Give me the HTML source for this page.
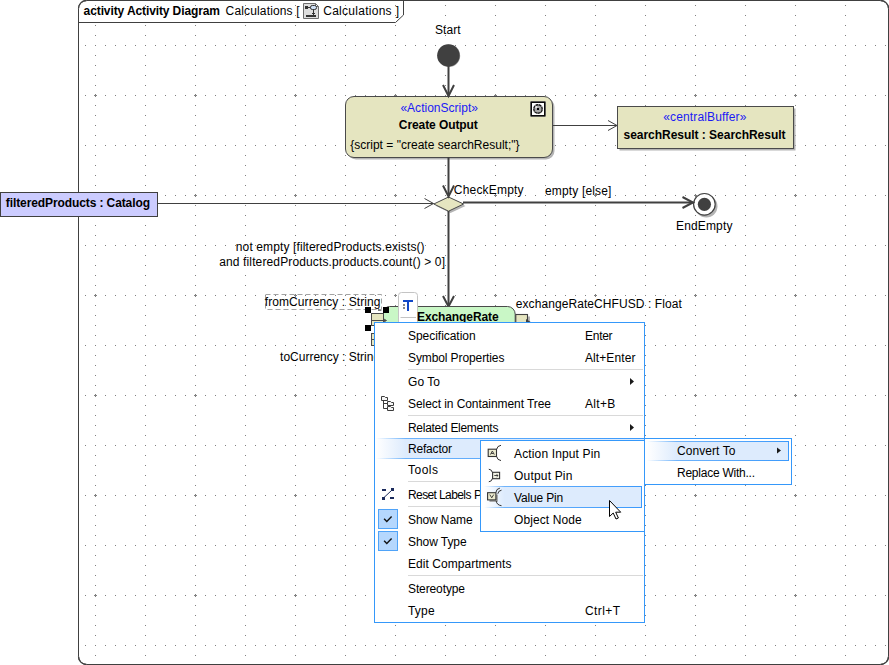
<!DOCTYPE html>
<html>
<head>
<meta charset="utf-8">
<title>Activity Diagram Calculations</title>
<style>
html,body{margin:0;padding:0;background:#fff;}
body{width:889px;height:665px;overflow:hidden;position:relative;font-family:"Liberation Sans",sans-serif;}
svg{position:absolute;left:0;top:0;display:block;}
text{font-family:"Liberation Sans",sans-serif;font-size:12px;fill:#000;}
.b{font-weight:bold;}
.bl{fill:#1a1af5;}
.m{fill:#000;font-size:12px;}
</style>
</head>
<body>
<svg width="889" height="665" viewBox="0 0 889 665">
<defs>
  <pattern id="grid" x="0" y="0" width="100" height="100" patternUnits="userSpaceOnUse">
    <g fill="#808080" shape-rendering="crispEdges">
      <!-- horizontal rows y=45,95 : dots every 10px -->
      <g id="hrow">
        <rect x="5" y="45" width="1" height="1"/><rect x="15" y="45" width="1" height="1"/><rect x="25" y="45" width="1" height="1"/><rect x="35" y="45" width="1" height="1"/><rect x="45" y="45" width="1" height="1"/><rect x="55" y="45" width="1" height="1"/><rect x="65" y="45" width="1" height="1"/><rect x="75" y="45" width="1" height="1"/><rect x="85" y="45" width="1" height="1"/><rect x="95" y="45" width="1" height="1"/>
      </g>
      <g><rect x="5" y="95" width="1" height="1"/><rect x="15" y="95" width="1" height="1"/><rect x="25" y="95" width="1" height="1"/><rect x="35" y="95" width="1" height="1"/><rect x="45" y="95" width="1" height="1"/><rect x="55" y="95" width="1" height="1"/><rect x="65" y="95" width="1" height="1"/><rect x="75" y="95" width="1" height="1"/><rect x="85" y="95" width="1" height="1"/><rect x="95" y="95" width="1" height="1"/></g>
      <g id="vcol">
        <rect x="45" y="5" width="1" height="1"/><rect x="45" y="15" width="1" height="1"/><rect x="45" y="25" width="1" height="1"/><rect x="45" y="35" width="1" height="1"/><rect x="45" y="55" width="1" height="1"/><rect x="45" y="65" width="1" height="1"/><rect x="45" y="75" width="1" height="1"/><rect x="45" y="85" width="1" height="1"/>
      </g>
      <g><rect x="95" y="5" width="1" height="1"/><rect x="95" y="15" width="1" height="1"/><rect x="95" y="25" width="1" height="1"/><rect x="95" y="35" width="1" height="1"/><rect x="95" y="55" width="1" height="1"/><rect x="95" y="65" width="1" height="1"/><rect x="95" y="75" width="1" height="1"/><rect x="95" y="85" width="1" height="1"/></g>
      <!-- cross at 95,95 -->
      <rect x="94" y="95" width="3" height="1"/><rect x="95" y="94" width="1" height="3"/>
    </g>
  </pattern>
  <linearGradient id="hl" x1="0" y1="0" x2="1" y2="0">
    <stop offset="0" stop-color="#ffffff"/>
    <stop offset="0.16" stop-color="#ddebfd"/>
    <stop offset="1" stop-color="#ddebfd"/>
  </linearGradient>
</defs>

<!-- frame with grid -->
<path d="M78.5 8.5 A8 8 0 0 1 86.5 0.5 H880.5 A8 8 0 0 1 888.5 8.5 V656.5 A8 8 0 0 1 880.5 664.5 H86.5 A8 8 0 0 1 78.5 656.5 Z" fill="url(#grid)" stroke="#404040" stroke-width="1"/>
<path d="M78.5 8.5 A8 8 0 0 1 86.5 0.5 M880.5 0.5 A8 8 0 0 1 888.5 8.5 M888.5 656.5 A8 8 0 0 1 880.5 664.5 M86.5 664.5 A8 8 0 0 1 78.5 656.5" fill="none" stroke="#404040" stroke-width="1.3"/>
<!-- header tab -->
<path d="M78.5 22.5 H395.5 L403.5 15 V0.5" fill="none" stroke="#404040" stroke-width="1"/>


<!-- ===== start node ===== -->
<circle cx="448.9" cy="55.8" r="11.3" fill="#9a9a9a"/>
<circle cx="448.4" cy="55.4" r="11.25" fill="#404040"/>

<!-- ===== Create Output action ===== -->
<rect x="347.5" y="98.5" width="207" height="61" rx="8.5" ry="8.5" fill="#b4b4b4"/>
<rect x="345.5" y="96.5" width="207" height="61" rx="8.5" ry="8.5" fill="#e5e5c0" stroke="#4a4a4a" stroke-width="1"/>
<!-- action script icon -->
<g shape-rendering="crispEdges">
  <rect x="530" y="101" width="16" height="16" fill="#5a5a55"/>
  <rect x="531" y="102" width="14" height="14" fill="#0a0a0a"/>
  <rect x="530" y="101" width="1" height="1" fill="#a0a090"/><rect x="545" y="101" width="1" height="1" fill="#a0a090"/>
  <rect x="530" y="116" width="1" height="1" fill="#a0a090"/><rect x="545" y="116" width="1" height="1" fill="#a0a090"/>
  <rect x="532" y="103" width="12" height="12" fill="#fff"/>
</g>
<circle cx="538" cy="109" r="4.2" fill="#a6a6a6" stroke="#141414" stroke-width="1.4"/>
<circle cx="538" cy="109" r="4.300" fill="none" stroke="#a6a6a6" stroke-width="1.4" stroke-dasharray="0.7 2.677" stroke-dashoffset="0.3"/>
<circle cx="536.3" cy="107.2" r="1.1" fill="#e8e8e8"/>
<rect x="537" y="108" width="2" height="2" fill="#000" shape-rendering="crispEdges"/>

<!-- ===== central buffer ===== -->
<rect x="619.5" y="108.5" width="176" height="42" fill="#b4b4b4"/>
<rect x="617.5" y="106.5" width="176" height="42" fill="#e5e5c0" stroke="#4a4a4a" stroke-width="1"/>

<!-- ===== decision ===== -->
<polygon points="436,206 450.5,199 465.5,206 450.5,213" fill="#b4b4b4"/>
<polygon points="433.8,204 448.5,197 463.600,204 448.5,211.2" fill="#e5e5c0" stroke="#4a4a4a" stroke-width="1"/>

<!-- ===== end node ===== -->
<circle cx="706.3" cy="206.3" r="11.2" fill="#b4b4b4"/>
<circle cx="704.4" cy="204.3" r="10.8" fill="#fff" stroke="#404040" stroke-width="1.2"/>
<circle cx="704.4" cy="204.3" r="6.6" fill="#404040"/>

<!-- ===== filteredProducts ===== -->
<rect x="0.5" y="192.5" width="157" height="24" fill="#ccccff" stroke="#404040" stroke-width="1"/>

<!-- ===== edges ===== -->
<g stroke="#404040" fill="none" stroke-linecap="butt" stroke-linejoin="miter">
  <!-- start -> action -->
  <line x1="448.5" y1="60" x2="448.5" y2="95.5" stroke-width="2"/>
  <polyline points="443,85 448.5,96 454,85" stroke-width="2"/>
  <!-- action -> decision -->
  <line x1="448.5" y1="157" x2="448.5" y2="196" stroke-width="2"/>
  <polyline points="443,185.5 448.5,196.5 454,185.5" stroke-width="2"/>
  <!-- decision -> exchangeRate -->
  <line x1="448.5" y1="211" x2="448.5" y2="306" stroke-width="2"/>
  <polyline points="443,296 448.5,306.5 454,296" stroke-width="2"/>
  <!-- filteredProducts -> decision -->
  <line x1="158" y1="203.5" x2="433.5" y2="203.5" stroke-width="1"/>
  <polyline points="424.5,198.5 433.5,203.5 424.5,208.5" stroke-width="1"/>
  <!-- decision -> EndEmpty -->
  <line x1="463" y1="202.5" x2="693" y2="202.5" stroke-width="2"/>
  <polyline points="682.5,197 693,202.5 682.5,208" stroke-width="2"/>
  <!-- action -> centralBuffer -->
  <line x1="553" y1="125.5" x2="617" y2="125.5" stroke-width="1"/>
  <polyline points="608,120.5 617,125.5 608,130.5" stroke-width="1"/>
</g>

<!-- ===== ExchangeRate action ===== -->
<path d="M389.5 306.5 H507.5 A7.7 7.7 0 0 1 515.2 314.2 V346 H383.5 V312.5 A6 6 0 0 1 389.5 306.5 Z" fill="#c9f7c6" stroke="#4a4a4a" stroke-width="1"/>
<!-- output pin -->
<rect x="518" y="316.5" width="12" height="7" fill="#b4b4b4"/>
<rect x="515.8" y="314.5" width="11.7" height="12" fill="#e5e5c0" stroke="#404040" stroke-width="1.1"/>
<path d="M526 319 L531.5 322.500 H526 Z" fill="#404040"/>
<!-- input pins -->
<rect x="371.5" y="313.5" width="12" height="12" fill="#e5e5c0" stroke="#4a4a4a" stroke-width="1"/>
<line x1="372" y1="320.5" x2="386" y2="320.5" stroke="#4a4a4a" stroke-width="1"/>
<polyline points="383,318.5 386.5,320.5 383,322.5" fill="none" stroke="#4a4a4a" stroke-width="1"/>
<rect x="371.5" y="333.5" width="12" height="12" fill="#e5e5c0" stroke="#4a4a4a" stroke-width="1"/>
<line x1="372" y1="339.5" x2="384" y2="339.5" stroke="#4a4a4a" stroke-width="1"/>
<!-- label dashed box -->
<rect x="265.5" y="294.5" width="116" height="15" fill="none" stroke="#a2a2a2" stroke-width="1" stroke-dasharray="5 3"/>
<path d="M378 308 L382 311 L378 311 Z" fill="#808080"/>
<!-- selection handles -->
<g fill="#000" shape-rendering="crispEdges">
  <rect x="365" y="307" width="6" height="6"/>
  <rect x="383" y="307" width="6" height="6"/>
  <rect x="365" y="325" width="6" height="6"/>
</g>
<!-- T widget -->
<rect x="398.5" y="292.5" width="19" height="34" rx="3" ry="3" fill="#fff" stroke="#c4c4c4" stroke-width="1"/>
<line x1="400.5" y1="317.5" x2="416" y2="317.5" stroke="#c4c4c4" stroke-width="1"/>
<g fill="#1248c8" shape-rendering="crispEdges">
  <rect x="403" y="300" width="10" height="2"/>
  <rect x="407" y="300" width="2" height="11"/>
</g>
<g fill="#8a8a8a" shape-rendering="crispEdges">
  <rect x="403" y="304" width="2" height="2"/>
  <rect x="403" y="307" width="2" height="2"/>
</g>



<!-- ===== diagram text ===== -->
<text x="83.6" y="15" class="b" textLength="136.4">activity Activity Diagram</text>
<text x="225.6" y="15" textLength="67">Calculations</text>
<text x="296.2" y="15">[</text>
<text x="323.2" y="15" textLength="68.4">Calculations</text>
<text x="395.8" y="15">]</text>
<!-- header icon -->
<g>
  <path d="M303.5 3.5 H315.5 L318.5 6.5 V18.5 H303.5 Z" fill="#dedede" stroke="#6e6e6e" stroke-width="1"/>
  <path d="M315.500 3.5 V6.5 H318.500 Z" fill="#fff" stroke="#6e6e6e" stroke-width="1" stroke-linejoin="round"/>
  <g fill="#333" shape-rendering="crispEdges">
    <rect x="305" y="6" width="3" height="3"/>
    <rect x="308" y="7" width="3" height="1"/>
    <rect x="313" y="10" width="1" height="5"/>
    <rect x="312" y="13" width="3" height="1"/>
    <rect x="306" y="15" width="10" height="2"/>
  </g>
  <rect x="310.5" y="5.500" width="6" height="4" rx="1.8" ry="1.800" fill="#cfe0f6" stroke="#333" stroke-width="1"/>
</g>
<text x="435" y="34" textLength="25.6">Start</text>
<text x="400.4" y="111.5" class="bl" textLength="77.6">«ActionScript»</text>
<text x="398.8" y="128.7" class="b" textLength="79">Create Output</text>
<text x="350.2" y="149" textLength="169.4">{script = "create searchResult;"}</text>
<text x="663.2" y="121.3" class="bl" textLength="83.2">«centralBuffer»</text>
<text x="623.5" y="138.8" class="b" textLength="162">searchResult : SearchResult</text>
<text x="453.8" y="194" textLength="69.8">CheckEmpty</text>
<text x="545" y="195" textLength="66.4">empty [else]</text>
<text x="676" y="230" textLength="56.4">EndEmpty</text>
<text x="5.8" y="207" class="b" textLength="144.2">filteredProducts : Catalog</text>
<text x="235.8" y="251" textLength="188.8">not empty [filteredProducts.exists()</text>
<text x="219.2" y="265.8" textLength="225.8">and filteredProducts.products.count() &gt; 0]</text>
<text x="264.8" y="306" textLength="115.6">fromCurrency : String</text>
<text x="417" y="321" class="b" textLength="81.6">ExchangeRate</text>
<text x="515.8" y="308" textLength="166">exchangeRateCHFUSD : Float</text>
<text x="280.1" y="361.2">toCurrency : String</text>



<defs>
  <linearGradient id="hlb" x1="0" y1="0" x2="1" y2="0">
    <stop offset="0" stop-color="#ffffff"/>
    <stop offset="0.12" stop-color="#6fb3fb"/>
    <stop offset="1" stop-color="#3a99fc"/>
  </linearGradient>
  <linearGradient id="hl2" gradientUnits="userSpaceOnUse" x1="484" y1="0" x2="642" y2="0">
    <stop offset="0" stop-color="#ffffff"/>
    <stop offset="0.13" stop-color="#ddebfd"/>
    <stop offset="1" stop-color="#ddebfd"/>
  </linearGradient>
  <linearGradient id="hl2b" gradientUnits="userSpaceOnUse" x1="484" y1="0" x2="642" y2="0">
    <stop offset="0" stop-color="#ffffff"/>
    <stop offset="0.13" stop-color="#6fb3fb"/>
    <stop offset="1" stop-color="#3a99fc"/>
  </linearGradient>
  <linearGradient id="hl3" gradientUnits="userSpaceOnUse" x1="647" y1="0" x2="789" y2="0">
    <stop offset="0" stop-color="#ffffff"/>
    <stop offset="0.21" stop-color="#ddebfd"/>
    <stop offset="1" stop-color="#ddebfd"/>
  </linearGradient>
  <linearGradient id="hl3b" gradientUnits="userSpaceOnUse" x1="647" y1="0" x2="789" y2="0">
    <stop offset="0" stop-color="#ffffff"/>
    <stop offset="0.21" stop-color="#6fb3fb"/>
    <stop offset="1" stop-color="#3a99fc"/>
  </linearGradient>
  <linearGradient id="hl1" gradientUnits="userSpaceOnUse" x1="376" y1="0" x2="644" y2="0">
    <stop offset="0" stop-color="#ffffff"/>
    <stop offset="0.11" stop-color="#ddebfd"/>
    <stop offset="1" stop-color="#ddebfd"/>
  </linearGradient>
  <linearGradient id="hl1b" gradientUnits="userSpaceOnUse" x1="376" y1="0" x2="644" y2="0">
    <stop offset="0" stop-color="#ffffff"/>
    <stop offset="0.11" stop-color="#6fb3fb"/>
    <stop offset="1" stop-color="#3a99fc"/>
  </linearGradient>
</defs>

<!-- ===== main popup menu ===== -->
<rect x="374.5" y="322.5" width="270" height="300" fill="#fff" stroke="#3598fa" stroke-width="1"/>
<!-- refactor highlight -->
<rect x="376" y="438" width="268" height="21" fill="url(#hl1)"/>
<rect x="376" y="438" width="268" height="1" fill="url(#hl1b)"/>
<rect x="376" y="458" width="268" height="1" fill="url(#hl1b)"/>
<!-- separators -->
<g fill="#d9d9d9" shape-rendering="crispEdges">
  <rect x="408" y="369" width="235" height="1"/>
  <rect x="408" y="415" width="235" height="1"/>
  <rect x="408" y="481" width="235" height="1"/>
  <rect x="408" y="506" width="235" height="1"/>
  <rect x="408" y="575" width="235" height="1"/>
</g>
<g class="m">
  <text class="m" x="408" y="340" textLength="67.6">Specification</text>
  <text class="m" x="585" y="340" textLength="27.6">Enter</text>
  <text class="m" x="408" y="362" textLength="96.4">Symbol Properties</text>
  <text class="m" x="585" y="362" textLength="50.4">Alt+Enter</text>
  <text class="m" x="408" y="386" textLength="32">Go To</text>
  <text class="m" x="408" y="408" textLength="143">Select in Containment Tree</text>
  <text class="m" x="585" y="408" textLength="30.2">Alt+B</text>
  <text class="m" x="408" y="432" textLength="90.4">Related Elements</text>
  <text class="m" x="408" y="453" textLength="44">Refactor</text>
  <text class="m" x="408" y="474" textLength="30">Tools</text>
  <text class="m" x="408" y="499" textLength="63.4">Reset Labels</text>
  <text class="m" x="474" y="499">Positions</text>
  <text class="m" x="408" y="524" textLength="64.6">Show Name</text>
  <text class="m" x="408" y="546" textLength="58.6">Show Type</text>
  <text class="m" x="408" y="568" textLength="103.4">Edit Compartments</text>
  <text class="m" x="408" y="593" textLength="57">Stereotype</text>
  <text class="m" x="408" y="615" textLength="26.6">Type</text>
  <text class="m" x="585" y="615" textLength="35">Ctrl+T</text>
</g>
<!-- submenu arrows -->
<g fill="#1a1a1a">
  <path d="M630 378 L634 381.5 L630 385 Z"/>
  <path d="M630 424 L634 427.5 L630 431 Z"/>
</g>
<!-- containment tree icon -->
<g fill="#f6f6f6" stroke="#3c3c3c" stroke-width="1">
  <path d="M381.5 396.5 H384.5 L385.5 397.5 H387.5 V400.5 H381.5 Z"/>
  <path d="M387.5 401.5 H390.5 L391.5 402.5 H393.5 V405.5 H387.5 Z"/>
  <path d="M387.5 406.5 H390.5 L391.5 407.5 H393.5 V410.5 H387.5 Z"/>
  <path d="M383.5 400.5 V408.5 H387.5 M383.5 403.5 H387.5" fill="none"/>
</g>
<!-- reset labels icon -->
<g fill="#1b2b5c" shape-rendering="crispEdges">
  <rect x="382" y="497" width="3" height="3"/>
  <rect x="391" y="488" width="3" height="3"/>
  <rect x="382" y="489" width="4" height="2"/>
  <rect x="390" y="497" width="4" height="2"/>
</g>
<line x1="384" y1="497.5" x2="391.5" y2="490.5" stroke="#1b2b5c" stroke-width="1"/>
<!-- check boxes -->
<rect x="378.5" y="509.5" width="19" height="19" fill="#b5d7fd" stroke="#4fa3f8" stroke-width="1"/>
<rect x="378.5" y="531.5" width="19" height="19" fill="#b5d7fd" stroke="#4fa3f8" stroke-width="1"/>
<polyline points="384.1,518.700 386.8,521.400 391.600,516.600" fill="none" stroke="#111" stroke-width="1.4"/>
<polyline points="384.1,540.700 386.8,543.400 391.600,538.600" fill="none" stroke="#111" stroke-width="1.4"/>

<!-- ===== submenu 3 (Convert To / Replace With) ===== -->
<rect x="644.5" y="438.5" width="147" height="46" fill="#fff" stroke="#3598fa" stroke-width="1"/>
<rect x="647" y="441" width="142" height="20" fill="url(#hl3)"/>
<rect x="647" y="441" width="142" height="1" fill="url(#hl3b)"/>
<rect x="647" y="460" width="142" height="1" fill="url(#hl3b)"/>
<rect x="788" y="441" width="1" height="20" fill="#3a99fc"/>
<text class="m" x="677" y="455" textLength="58.4">Convert To</text>
<text class="m" x="677" y="476.5" textLength="78">Replace With...</text>
<path d="M777 447.5 L781 450.5 L777 453.5 Z" fill="#1a1a1a"/>

<!-- ===== submenu 2 (pins) ===== -->
<rect x="480.5" y="440.5" width="164" height="91" fill="#fff" stroke="#3598fa" stroke-width="1"/>
<rect x="484" y="486" width="158" height="22" fill="url(#hl2)"/>
<rect x="484" y="486" width="158" height="1" fill="url(#hl2b)"/>
<rect x="484" y="507" width="158" height="1" fill="url(#hl2b)"/>
<rect x="641" y="486" width="1" height="22" fill="#3a99fc"/>
<text class="m" x="514" y="458" textLength="86.2">Action Input Pin</text>
<text class="m" x="514" y="480" textLength="58.4">Output Pin</text>
<text class="m" x="514" y="501.8" textLength="49.2">Value Pin</text>
<text class="m" x="514" y="524" textLength="67.6">Object Node</text>
<!-- pin icons -->
<g fill="none" stroke="#333" stroke-width="1">
  <!-- action input pin -->
  <path d="M501 445.3 Q497.2 445.8 496.7 449.2 M496.7 456.6 Q497.2 460.1 501 460.6"/>
  <rect x="488.2" y="449.2" width="8.300" height="7.300" fill="#ecebcf" stroke-width="1.1"/>
  <path d="M490.4 454.6 L492.350 451 L494.3 454.6 M491.2 453.5 H493.5" stroke-width="0.9"/>
  <!-- output pin -->
  <path d="M488.8 469.2 Q492 469.600 492.3 472.4 M492.3 478.6 Q492 481.400 488.8 481.8"/>
  <rect x="492.6" y="472.3" width="7" height="6.400" fill="#f2f2e4" stroke-width="1.1"/>
  <path d="M494.3 475.5 H498 M496.700 474.2 L498 475.5 L496.700 476.8" stroke-width="0.9"/>
  <!-- value pin -->
  <rect x="489.5" y="494.5" width="8.300" height="7.300" fill="#9a9a9a" stroke="none"/>
  <path d="M499.9 488.1 Q496.3 488.700 495.8 492.6 M501.5 490.2 Q498.2 490.600 497.8 493.8 M496.2 501 Q496.8 505.100 501.5 505.700"/>
  <rect x="487.600" y="492.700" width="8.300" height="7.200" fill="#ecebcf" stroke-width="1.1"/>
  <path d="M489.8 494.600 L491.750 497.8 L493.700 494.600" stroke-width="0.9"/>
</g>
<!-- mouse cursor -->
<path d="M609.5 500.5 V516.5 L613.2 513 L616 519 L618.4 518 L615.7 512.2 H620.700 Z" fill="#fff" stroke="#000" stroke-width="1" stroke-linejoin="miter"/>


</svg>
</body>
</html>
